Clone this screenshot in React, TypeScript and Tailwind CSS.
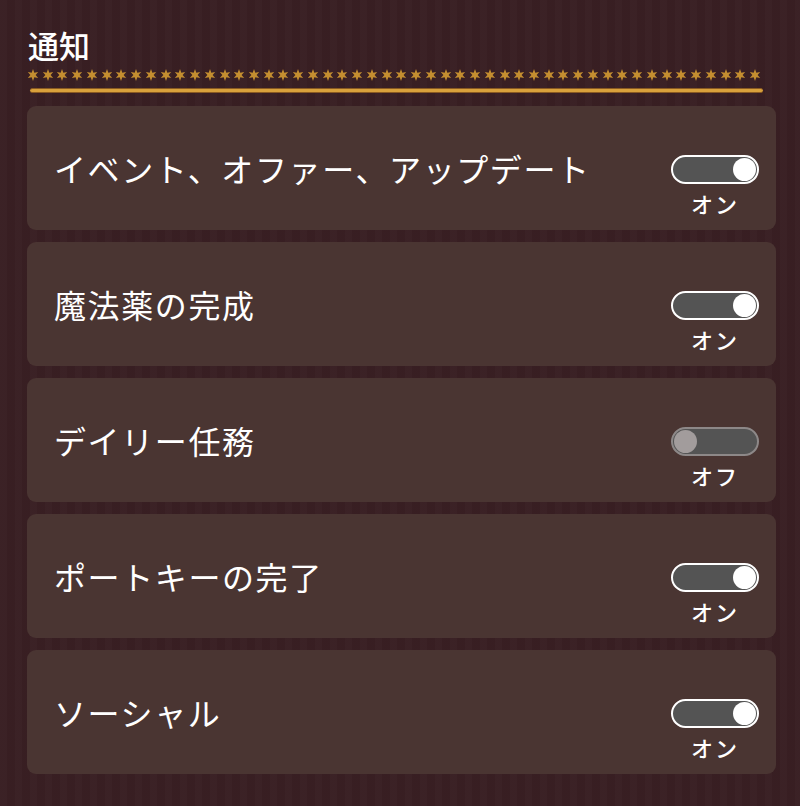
import React from 'react';

type Item = { label: string; on: boolean };

const items: Item[] = [
  { label: 'イベント、オファー、アップデート', on: true },
  { label: '魔法薬の完成', on: true },
  { label: 'デイリー任務', on: false },
  { label: 'ポートキーの完了', on: true },
  { label: 'ソーシャル', on: true },
];

const Star: React.FC = () => (
  <svg width="12" height="12" viewBox="0 0 12 12" className="shrink-0">
    <path
      d="M6 0 L7.3 3.8 L11.2 3 L8.6 6 L11.2 9 L7.3 8.2 L6 12 L4.7 8.2 L0.8 9 L3.4 6 L0.8 3 L4.7 3.8 Z"
      fill="#c48e30"
    />
  </svg>
);

const Toggle: React.FC<{ on: boolean }> = ({ on }) => (
  <div
    className={
      on
        ? 'w-[88px] h-[29px] rounded-full border-2 border-white bg-[#545454] flex items-center justify-end px-[1px]'
        : 'w-[88px] h-[29px] rounded-full border-2 border-[#8d8888] bg-[#545454] flex items-center justify-start px-[1px]'
    }
  >
    <div
      className={
        on
          ? 'w-[23px] h-[23px] rounded-full bg-white'
          : 'w-[23px] h-[23px] rounded-full bg-[#a29c9c]'
      }
    />
  </div>
);

const Row: React.FC<{ item: Item }> = ({ item }) => (
  <div className="h-[124px] rounded-[9px] bg-[#4a3532] flex items-center justify-between pl-[27px] pr-[17px]">
    <span className="text-[32px] leading-none tracking-[1.6px] text-white">{item.label}</span>
    <div className="self-end pb-[14px] flex flex-col items-center">
      <Toggle on={item.on} />
      <span className="mt-[6px] text-[22px] leading-[26px] font-medium text-white tracking-[2px]">
        {item.on ? 'オン' : 'オフ'}
      </span>
    </div>
  </div>
);

export default function App() {
  return (
    <div
      className="w-[800px] h-[806px] overflow-hidden bg-[#391f23] bg-[repeating-linear-gradient(90deg,rgba(255,255,255,0.01)_0px,rgba(255,255,255,0.01)_7px,rgba(0,0,0,0.02)_7px,rgba(0,0,0,0.02)_15px)]"
      style={{ fontFamily: '"Noto Sans CJK JP", "Noto Sans", sans-serif' }}
    >
      <div className="pl-[27px] pr-[24px] pt-[26px]">
        <h1 className="pl-[1px] text-[31px] leading-[38px] font-medium text-white">通知</h1>
        <div className="mt-[5px] w-[734px] flex justify-between">
          {Array.from({ length: 50 }).map((_, i) => (
            <Star key={i} />
          ))}
        </div>
        <div className="mt-[7px] ml-[3px] w-[733px] h-[5px] rounded-full bg-[#d9a13c] border-y border-[#8a5a22]" />
        <div className="mt-[13px] flex flex-col gap-[12px]">
          {items.map((it) => (
            <Row key={it.label} item={it} />
          ))}
        </div>
      </div>
    </div>
  );
}
